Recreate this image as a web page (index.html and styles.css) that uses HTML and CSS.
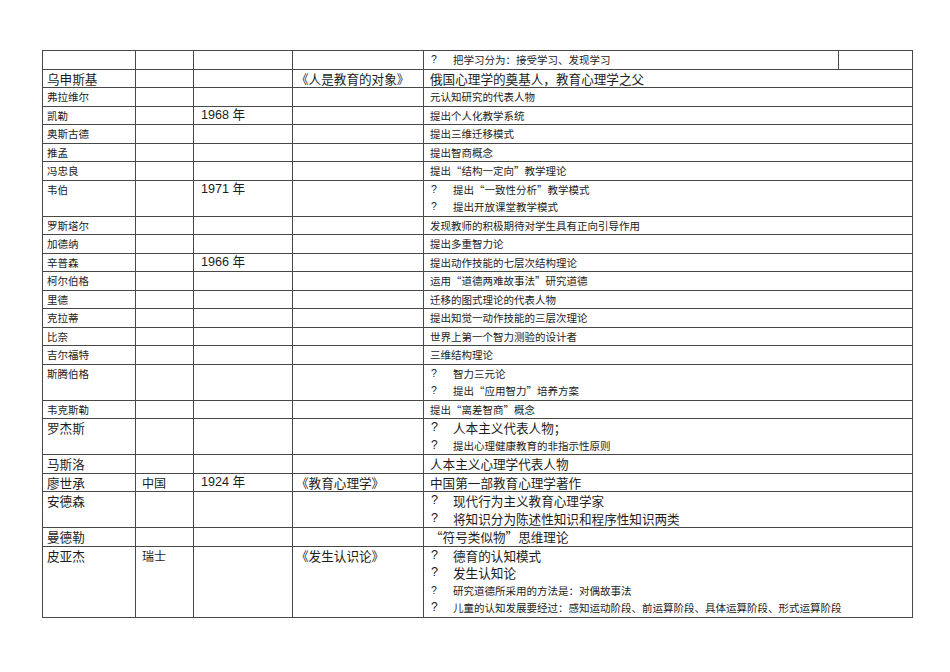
FILE: index.html
```html
<!DOCTYPE html>
<html lang="zh-CN">
<head>
<meta charset="utf-8">
<title>教育心理学人物表</title>
<link rel="stylesheet" href="styles.css">
</head>
<body>
<div class="page">
<table class="sheet">
<colgroup>
<col class="c-name"><col class="c-country"><col class="c-year"><col class="c-book"><col class="c-desc"><col class="c-extra">
</colgroup>
<tbody>
<tr>
<td></td><td></td><td></td><td></td>
<td class="desc"><div class="li"><span class="q">?</span>把学习分为：接受学习、发现学习</div></td>
<td></td>
</tr>
<tr class="big">
<td>乌申斯基</td><td></td><td></td><td class="book">《人是教育的对象》</td>
<td class="desc" colspan="2">俄国心理学的奠基人，教育心理学之父</td>
</tr>
<tr><td>弗拉维尔</td><td></td><td></td><td></td><td class="desc" colspan="2">元认知研究的代表人物</td></tr>
<tr><td>凯勒</td><td></td><td class="year">1968 年</td><td></td><td class="desc" colspan="2">提出个人化教学系统</td></tr>
<tr><td>奥斯古德</td><td></td><td></td><td></td><td class="desc" colspan="2">提出三维迁移模式</td></tr>
<tr><td>推孟</td><td></td><td></td><td></td><td class="desc" colspan="2">提出智商概念</td></tr>
<tr><td>冯忠良</td><td></td><td></td><td></td><td class="desc" colspan="2">提出“结构一定向”教学理论</td></tr>
<tr>
<td>韦伯</td><td></td><td class="year">1971 年</td><td></td>
<td class="desc" colspan="2">
<div class="li"><span class="q">?</span>提出“一致性分析”教学模式</div>
<div class="li"><span class="q">?</span>提出开放课堂教学模式</div>
</td>
</tr>
<tr><td>罗斯塔尔</td><td></td><td></td><td></td><td class="desc" colspan="2">发现教师的积极期待对学生具有正向引导作用</td></tr>
<tr><td>加德纳</td><td></td><td></td><td></td><td class="desc" colspan="2">提出多重智力论</td></tr>
<tr><td>辛普森</td><td></td><td class="year">1966 年</td><td></td><td class="desc" colspan="2">提出动作技能的七层次结构理论</td></tr>
<tr><td>柯尔伯格</td><td></td><td></td><td></td><td class="desc" colspan="2">运用“道德两难故事法”研究道德</td></tr>
<tr><td>里德</td><td></td><td></td><td></td><td class="desc" colspan="2">迁移的图式理论的代表人物</td></tr>
<tr><td>克拉蒂</td><td></td><td></td><td></td><td class="desc" colspan="2">提出知觉一动作技能的三层次理论</td></tr>
<tr><td>比奈</td><td></td><td></td><td></td><td class="desc" colspan="2">世界上第一个智力测验的设计者</td></tr>
<tr><td>吉尔福特</td><td></td><td></td><td></td><td class="desc" colspan="2">三维结构理论</td></tr>
<tr>
<td>斯腾伯格</td><td></td><td></td><td></td>
<td class="desc" colspan="2">
<div class="li"><span class="q">?</span>智力三元论</div>
<div class="li"><span class="q">?</span>提出“应用智力”培养方案</div>
</td>
</tr>
<tr><td>韦克斯勒</td><td></td><td></td><td></td><td class="desc" colspan="2">提出“离差智商”概念</td></tr>
<tr>
<td class="bigtext">罗杰斯</td><td></td><td></td><td></td>
<td class="desc" colspan="2">
<div class="li bigtext"><span class="q">?</span>人本主义代表人物；</div>
<div class="li"><span class="q qb">?</span>提出心理健康教育的非指示性原则</div>
</td>
</tr>
<tr class="big"><td>马斯洛</td><td></td><td></td><td></td><td class="desc" colspan="2">人本主义心理学代表人物</td></tr>
<tr class="big">
<td>廖世承</td><td class="country">中国</td><td class="year">1924 年</td><td class="book">《教育心理学》</td>
<td class="desc" colspan="2">中国第一部教育心理学著作</td>
</tr>
<tr class="big">
<td>安德森</td><td></td><td></td><td></td>
<td class="desc" colspan="2">
<div class="li"><span class="q">?</span>现代行为主义教育心理学家</div>
<div class="li"><span class="q">?</span>将知识分为陈述性知识和程序性知识两类</div>
</td>
</tr>
<tr class="big"><td>曼德勒</td><td></td><td></td><td></td><td class="desc" colspan="2">“符号类似物”思维理论</td></tr>
<tr class="big">
<td>皮亚杰</td><td class="country">瑞士</td><td></td><td class="book">《发生认识论》</td>
<td class="desc" colspan="2">
<div class="li"><span class="q">?</span>德育的认知模式</div>
<div class="li"><span class="q">?</span>发生认知论</div>
<div class="li smalltext"><span class="q">?</span>研究道德所采用的方法是：对偶故事法</div>
<div class="li smalltext"><span class="q qb">?</span>儿童的认知发展要经过：感知运动阶段、前运算阶段、具体运算阶段、形式运算阶段</div>
</td>
</tr>
</tbody>
</table>
</div>
</body>
</html>
```
FILE: styles.css
```css
html, body {
  margin: 0;
  padding: 0;
  background: #ffffff;
}

.page {
  padding: 50px 0 0 42px;
}

.sheet {
  border-collapse: collapse;
  table-layout: fixed;
  width: 870px;
  font-family: "Noto Sans CJK SC", "Liberation Sans", sans-serif;
  font-size: 10.5px;
  line-height: 17.5px;
  color: #1c1c1c;
}

.c-name { width: 93px; }
.c-country { width: 58px; }
.c-year { width: 99px; }
.c-book { width: 131px; }
.c-desc { width: 415px; }
.c-extra { width: 74px; }

.sheet td {
  border: 1px solid #484848;
  padding: 0 0 0 4px;
  vertical-align: top;
  white-space: nowrap;
  overflow: hidden;
  height: 17.5px;
}

.sheet td.desc {
  padding-left: 6px;
}

.sheet td.year {
  padding-left: 7px;
  font-family: "Liberation Sans", "Noto Sans CJK SC", sans-serif;
  font-size: 12.6px;
}

.sheet td.country {
  padding-left: 6px;
  font-size: 12px;
}

.sheet td.book {
  padding-left: 3px;
}

.big td,
.bigtext {
  font-size: 12.6px;
}

.smalltext {
  font-size: 10.5px;
}

.li {
  display: flex;
  height: 17.5px;
}

.q {
  display: inline-block;
  width: 22px;
  flex: none;
  padding-left: 1px;
  font-family: "Liberation Sans", sans-serif;
}

.qb {
  font-size: 12px;
}
```
